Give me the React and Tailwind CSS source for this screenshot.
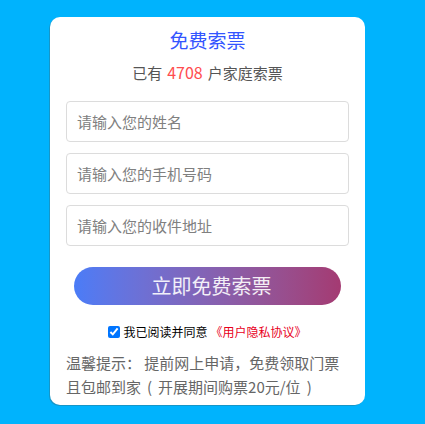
import { useState } from "react";

const font = { fontFamily: '"Noto Sans CJK SC", "Noto Sans", sans-serif' };

export default function App() {
  const [agree, setAgree] = useState(true)

  return (
    <div className="w-[425px] h-[424px] bg-[#00b3fd] pt-[17px] pl-[50px] overflow-hidden" style={font}>
      <div className="w-[315px] h-[388px] bg-white rounded-[10px] px-4 pt-[11px] flex flex-col shadow-[-1px_1px_0_#1696c8]">

        {/* Header */}
        <h1 className="text-center text-[19px] leading-[24px] text-[#3355ff]">免费索票</h1>
        <p className="mt-[8px] text-center text-[15px] leading-[24px] text-[#555]">
          已有<span className="px-[5px] text-[16px] text-[#ff4d4f]">4708</span>户家庭索票
        </p>

        {/* Form */}
        <div className="mt-[16px] flex flex-col gap-[11px]">
          <input className="h-[41px] w-full rounded-[4px] border border-[#dcdcdc] px-[10px] text-[15px] outline-none placeholder:text-[#808080]" placeholder="请输入您的姓名" />
          <input className="h-[41px] w-full rounded-[4px] border border-[#dcdcdc] px-[10px] text-[15px] outline-none placeholder:text-[#808080]" placeholder="请输入您的手机号码" />
          <input className="h-[41px] w-full rounded-[4px] border border-[#dcdcdc] px-[10px] text-[15px] outline-none placeholder:text-[#808080]" placeholder="请输入您的收件地址" />
        </div>

        <button className="mt-[21px] mx-2 h-[38px] rounded-full bg-gradient-to-r from-[#4a7cf7] to-[#a43a72] text-[20px] text-white/90 pl-2">
          立即免费索票
        </button>

        <label className="mt-[17px] h-[20px] flex items-center justify-center gap-[3px] text-[12px] text-black">
          <input type="checkbox" checked={agree} onChange={() => setAgree(!agree)} className="w-[12px] h-[12px] accent-[#0075ff]" />
          <span>我已阅读并同意</span>
          <span className="text-[#e8001c]">《用户隐私协议》</span>
        </label>

        {/* Tip */}
        <div className="mt-[9px] text-[15px] leading-[24px] text-[#666]">
          <p className="whitespace-nowrap">温馨提示： 提前网上申请，免费领取门票</p>
          <p className="whitespace-nowrap">且包邮到家<span className="px-[6px]">(</span>开展期间购票20元/位<span className="px-[6px]">)</span></p>
        </div>
      </div>
    </div>
  );
}
